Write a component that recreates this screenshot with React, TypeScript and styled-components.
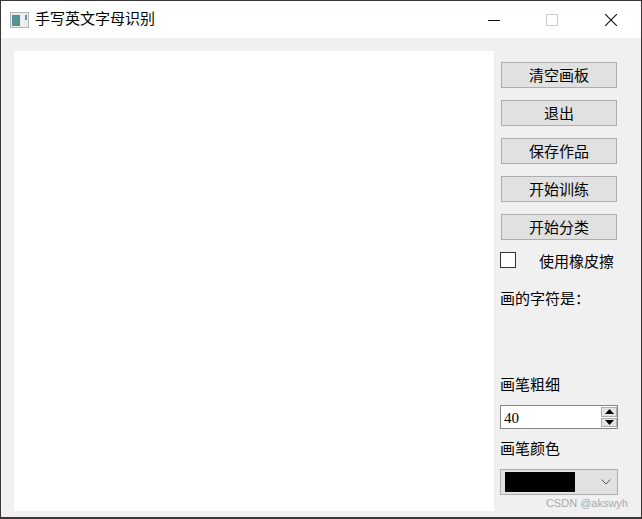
import React from 'react';
import styled, { createGlobalStyle } from 'styled-components';

const GlobalStyle = createGlobalStyle`
  html, body {
    margin: 0;
    padding: 0;
    height: 100%;
    background: #3b3633;
    overflow: hidden;
  }
  #root {
    height: 100%;
  }
`;

const buttons = ['清空画板', '退出', '保存作品', '开始训练', '开始分类'];

export default function App() {
  return (
    <>
      <GlobalStyle />
      <Window>
        <TitleBar>
          <AppIcon width="19" height="16" viewBox="0 0 19 16">
            <defs>
              <linearGradient id="shot" x1="0" y1="0" x2="1" y2="1">
                <stop offset="0" stopColor="#5b8fb0" />
                <stop offset="1" stopColor="#4f9a6c" />
              </linearGradient>
            </defs>
            <rect x="0.5" y="0.5" width="18" height="15" fill="#e8eced" stroke="#b4b8ba" />
            <rect x="2" y="3" width="8" height="11" fill="url(#shot)" />
            <rect x="11" y="3" width="3" height="11" fill="#eef2f2" />
            <rect x="15" y="3" width="2" height="5" fill="#5f9aa0" />
          </AppIcon>
          <Title>手写英文字母识别</Title>
          <WindowControls>
            <WindowControl>
              <svg width="12" height="12" viewBox="0 0 12 12">
                <path d="M0 6.5H12" stroke="#111" />
              </svg>
            </WindowControl>
            <WindowControl>
              <svg width="12" height="12" viewBox="0 0 12 12">
                <rect x="0.5" y="0.5" width="11" height="11" fill="none" stroke="#ccc" />
              </svg>
            </WindowControl>
            <WindowControl>
              <svg width="12" height="12" viewBox="0 0 12 12">
                <path d="M0 0L12 12M12 0L0 12" stroke="#111" strokeWidth="1.1" />
              </svg>
            </WindowControl>
          </WindowControls>
        </TitleBar>
        <Body>
          <Canvas />
          <Sidebar>
            <ButtonList>
              {buttons.map((label) => (
                <ActionButton key={label}>{label}</ActionButton>
              ))}
            </ButtonList>
            <EraserRow>
              <FakeCheckbox />
              <span>使用橡皮擦</span>
            </EraserRow>
            <ResultLabel>画的字符是：</ResultLabel>
            <Spacer />
            <FieldLabel>画笔粗细</FieldLabel>
            <SpinBox>
              <SpinValue>40</SpinValue>
              <SpinButtons>
                <SpinButton>
                  <svg width="9" height="5" viewBox="0 0 9 5">
                    <path d="M4.5 0L9 5H0Z" fill="#000" />
                  </svg>
                </SpinButton>
                <SpinButton>
                  <svg width="9" height="5" viewBox="0 0 9 5">
                    <path d="M0 0H9L4.5 5Z" fill="#000" />
                  </svg>
                </SpinButton>
              </SpinButtons>
            </SpinBox>
            <ColorLabel>画笔颜色</ColorLabel>
            <ColorCombo>
              <Swatch />
              <svg width="10" height="6" viewBox="0 0 10 6">
                <path d="M0.5 0.5L5 5L9.5 0.5" fill="none" stroke="#555" />
              </svg>
            </ColorCombo>
          </Sidebar>
        </Body>
        <Watermark>CSDN @akswyh</Watermark>
      </Window>
    </>
  );
}

const Window = styled.div`
  position: relative;
  box-sizing: border-box;
  width: 640px;
  height: 516px;
  margin: 1px 0 0 1px;
  background: #f0f0f0;
  display: flex;
  flex-direction: column;
  font-family: 'Noto Sans CJK SC', sans-serif;
  font-size: 15px;
  color: #000;
`;

const TitleBar = styled.div`
  flex: none;
  height: 37px;
  background: #fff;
  display: flex;
  align-items: center;
  padding-left: 9px;
`;

const AppIcon = styled.svg`
  display: block;
  flex: none;
`;

const Title = styled.div`
  margin-left: 6px;
  line-height: 33px;
  height: 37px;
`;

const WindowControls = styled.div`
  margin-left: auto;
  display: flex;
  padding-right: 1px;
`;

const WindowControl = styled.div`
  width: 58.5px;
  height: 37px;
  display: flex;
  align-items: center;
  justify-content: center;
`;

const Body = styled.div`
  flex: 1;
  display: flex;
  padding: 13px 0 5px 13px;
  min-height: 0;
`;

const Canvas = styled.div`
  flex: none;
  width: 480px;
  height: 460px;
  background: #fff;
`;

const Sidebar = styled.div`
  flex: none;
  width: 118px;
  margin-left: 6px;
  display: flex;
  flex-direction: column;
  padding-top: 11px;
`;

const ButtonList = styled.div`
  display: flex;
  flex-direction: column;
  gap: 12px;
  padding-left: 1px;
`;

const ActionButton = styled.div`
  box-sizing: border-box;
  width: 116px;
  height: 26px;
  padding-bottom: 2px;
  background: #e1e1e1;
  border: 1px solid #adadad;
  display: flex;
  align-items: center;
  justify-content: center;
`;

const EraserRow = styled.div`
  margin-top: 12px;
  height: 16px;
  display: flex;
  align-items: center;
  justify-content: space-between;
  padding-right: 4px;
`;

const FakeCheckbox = styled.div`
  box-sizing: border-box;
  width: 16px;
  height: 16px;
  background: #fff;
  border: 1px solid #333;
`;

const ResultLabel = styled.div`
  margin-top: 21px;
  height: 20px;
  line-height: 18px;
`;

const Spacer = styled.div`
  height: 66px;
`;

const FieldLabel = styled.div`
  height: 20px;
  line-height: 18px;
`;

const SpinBox = styled.div`
  box-sizing: border-box;
  margin-top: 10px;
  height: 24px;
  background: #fff;
  border: 1px solid #858585;
  display: flex;
  align-items: center;
  justify-content: space-between;
`;

const SpinValue = styled.span`
  font-family: 'Liberation Serif', serif;
  font-size: 15px;
  padding: 2px 0 0 3px;
`;

const SpinButtons = styled.div`
  align-self: stretch;
  width: 16px;
  margin: 1px 0 1px 0;
  display: flex;
  flex-direction: column;
  gap: 1px;
`;

const SpinButton = styled.div`
  flex: 1;
  background: #e4e4e4;
  border: 1px solid #adadad;
  box-sizing: border-box;
  display: flex;
  align-items: center;
  justify-content: center;
`;

const ColorLabel = styled(FieldLabel)`
  margin-top: 10px;
`;

const ColorCombo = styled.div`
  box-sizing: border-box;
  margin-top: 10px;
  height: 26px;
  background: #e1e1e1;
  border: 1px solid #adadad;
  display: flex;
  align-items: center;
  justify-content: space-between;
  padding: 0 6px 0 4px;
`;

const Swatch = styled.div`
  width: 70px;
  height: 20px;
  background: #000;
`;

const Watermark = styled.div`
  position: absolute;
  right: 13px;
  top: 495px;
  font-family: 'Liberation Sans', sans-serif;
  font-size: 11px;
  line-height: 14px;
  color: #aaa;
`;
